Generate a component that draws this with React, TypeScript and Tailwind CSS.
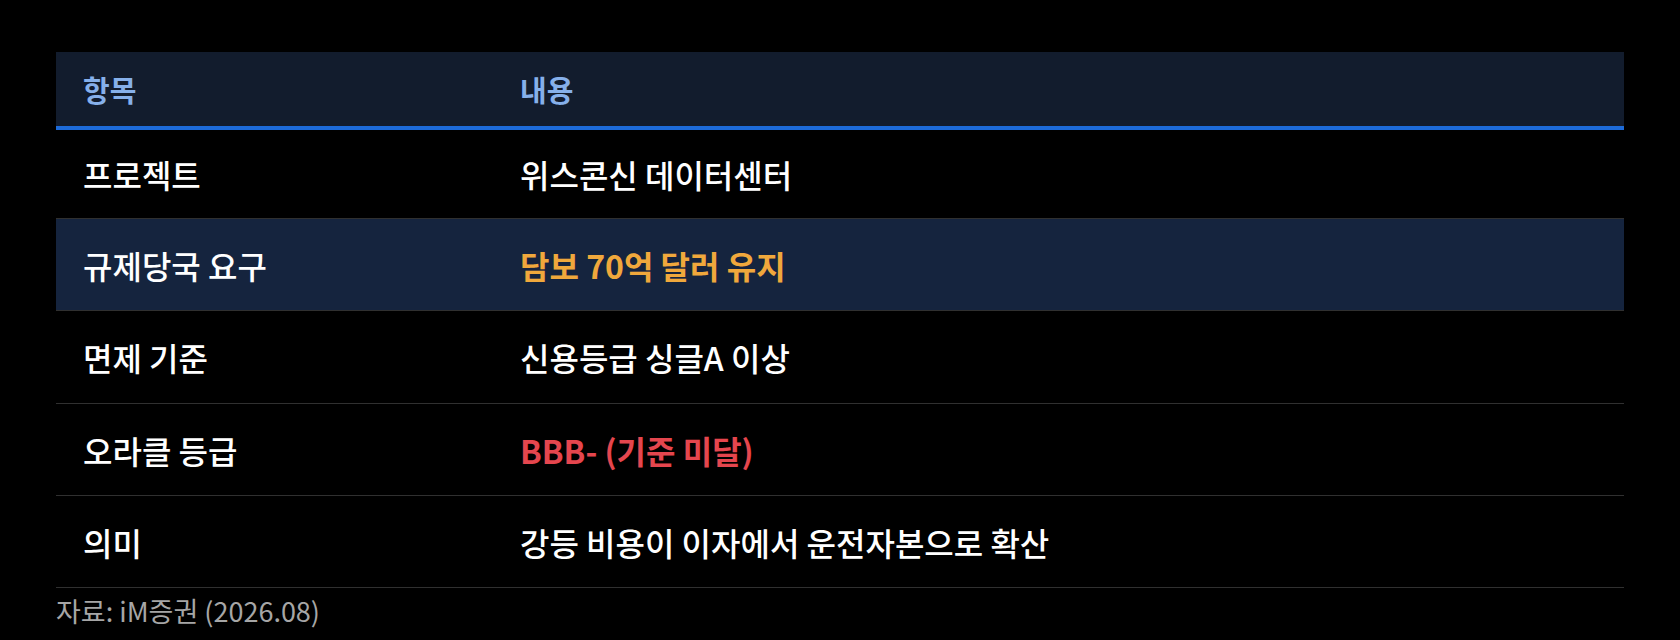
import React from 'react';

interface Row {
    label: string;
    value: string;
    tone?: 'warn' | 'bad';
    highlight?: boolean;
    h: string;
}

const rows: Row[] = [
    { label: '프로젝트', value: '위스콘신 데이터센터', h: 'h-[89px]' },
    { label: '규제당국 요구', value: '담보 70억 달러 유지', tone: 'warn', highlight: true, h: 'h-[92px]' },
    { label: '면제 기준', value: '신용등급 싱글A 이상', h: 'h-[93px]' },
    { label: '오라클 등급', value: 'BBB- (기준 미달)', tone: 'bad', h: 'h-[92px]' },
    { label: '의미', value: '강등 비용이 이자에서 운전자본으로 확산', h: 'h-[92px]' },
];

const font = { fontFamily: '"Noto Sans CJK KR", "Noto Sans", sans-serif' };

export default function App() {
    return (
        <div className="w-[1680px] h-[640px] bg-black pt-[52px] px-[56px]" style={font}>
            {/* header */}
            <div className="grid grid-cols-[437px_1fr] h-[78px] bg-[#121c2d] border-b-4 border-[#1d6bd9] items-center text-[29px] leading-none font-bold text-[#86b0ea]">
                <div className="pl-[27px]">항목</div>
                <div className="pl-[27px]">내용</div>
            </div>

            {rows.map((r) => (
                <div
                    key={r.label}
                    className={`grid grid-cols-[437px_1fr] items-center border-b border-[#303030] text-[32px] leading-none ${r.h} ${r.highlight ? 'bg-[#15243e]' : ''}`}
                >
                    <div className="pl-[27px] font-medium text-white">{r.label}</div>
                    <div
                        className={`pl-[27px] ${
                            r.tone === 'warn'
                                ? 'font-bold text-[#f0a83c]'
                                : r.tone === 'bad'
                                ? 'font-bold text-[#e5464e]'
                                : 'font-medium text-white'
                        }`}
                    >
                        {r.value}
                    </div>
                </div>
            ))}

            <p className="mt-[9px] text-[27px] leading-none text-[#a6a6a6]">자료: iM증권 (2026.08)</p>
        </div>
    );
}
